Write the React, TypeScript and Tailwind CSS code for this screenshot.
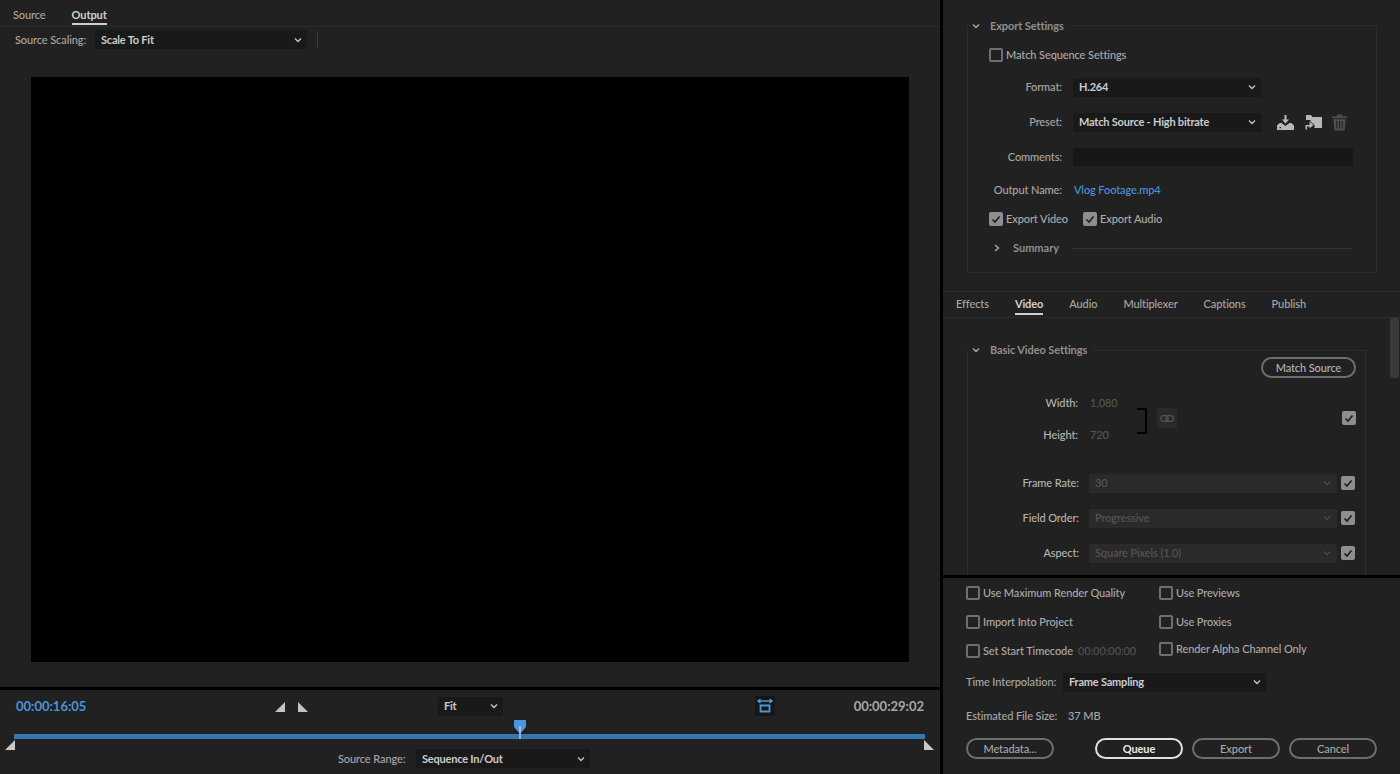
import React from 'react';

const Chevron = ({ className = 'text-[#c8c8c8]' }: { className?: string }) => (
  <svg width="8" height="6" viewBox="0 0 8 6" fill="none" className={className}>
    <path d="M1 1.5 L4 4.5 L7 1.5" stroke="currentColor" strokeWidth="1.3" />
  </svg>
);

const Check = ({ checked = false, className = '' }: { checked?: boolean; className?: string }) =>
  checked ? (
    <span className={`flex h-[14px] w-[14px] shrink-0 items-center justify-center rounded-[2px] bg-[#8e8e8e] ${className}`}>
      <svg width="10" height="9" viewBox="0 0 10 9" fill="none">
        <path d="M1.5 4.5 L4 7 L8.5 1.5" stroke="#1c1c1c" strokeWidth="1.6" />
      </svg>
    </span>
  ) : (
    <span className={`h-[14px] w-[14px] shrink-0 rounded-[2px] border-2 border-[#6f6f6f] ${className}`} />
  );

const CheckRow = ({ label, checked, className = '' }: { label: string; checked?: boolean; className?: string }) => (
  <div className={`flex h-[20px] items-center gap-[3px] ${className}`}>
    <Check checked={checked} />
    <span className="whitespace-nowrap text-[#ababab]">{label}</span>
  </div>
);

const Select = ({ value, className = '' }: { value: string; className?: string }) => (
  <div className={`flex h-[19px] shrink-0 items-center justify-between rounded-[1px] bg-[#191919] pl-[6px] pr-[5px] font-bold tracking-[-0.2px] text-[#cccccc] ${className}`}>
    <span className="whitespace-nowrap">{value}</span>
    <Chevron />
  </div>
);

const DisabledRow = ({ label, value, className = '' }: { label: string; value: string; className?: string }) => (
  <div className={`flex h-[20px] items-center ${className}`}>
    <span className="w-[83px] shrink-0 text-right text-[#b4b4b4]">{label}</span>
    <div className="ml-[10px] flex h-[19px] w-[248px] items-center justify-between rounded-[1px] bg-[#2a2a2a] pl-[6px] pr-[6px] text-[#565656]">
      <span>{value}</span>
      <Chevron className="text-[#4a4a4a]" />
    </div>
    <Check checked className="ml-[4px]" />
  </div>
);

const Pill = ({ label, className = '' }: { label: string; className?: string }) => (
  <div className={`flex h-[21px] shrink-0 items-center justify-center rounded-full border-2 border-[#6e6e6e] text-[#a8a8a8] ${className}`}>
    {label}
  </div>
);

const Tabs = ({ items, active, className = '', itemClass = '' }: { items: string[]; active: string; className?: string; itemClass?: string }) => (
  <div className={`flex gap-[26px] ${className}`}>
    {items.map((t) => (
      <div key={t} className={`flex h-full items-center border-b-2 ${itemClass} ${t === active ? 'border-[#cfcfcf] font-bold text-[#d0d0d0]' : 'border-transparent text-[#a8a8a8]'}`}>
        {t}
      </div>
    ))}
  </div>
);

const SaveIcon = () => (
  <svg width="17" height="15" viewBox="0 0 17 15" className="text-[#b8b8b8]">
    <path fill="currentColor" d="M7.500 0h2v4.500h2.500L8.500 8.500 5 4.500h2.500z" />
    <path fill="currentColor" d="M0 10.500l2.500-2.500h2l4 3 4-3h2l2.500 2.500V15H0zM2.500 12v1.200h1.500V12z" />
  </svg>
);

const ImportIcon = () => (
  <svg width="17" height="16" viewBox="0 0 17 16" className="text-[#b8b8b8]">
    <path fill="currentColor" d="M1 1h5l1.500 2H17v11H9.500v-3L5.500 7.500V6H1z" />
    <path fill="currentColor" d="M4.500 7.500l4 3.500-4 3.500V12.500H2V15.500H.500v-4.500h4z" />
  </svg>
);

const TrashIcon = () => (
  <svg width="15" height="17" viewBox="0 0 16 17" className="-ml-[1px] text-[#4f4f4f]">
    <path fill="currentColor" d="M0 2h5V0h6v2h5v2H0zM1.500 5h13l-1 12h-11zM4.500 7v8h1.200V7zM7.400 7v8h1.200V7zM10.300 7v8h1.200V7z" />
  </svg>
);

const SafeMarginIcon = () => (
  <svg width="16" height="14" viewBox="0 0 16 14" fill="none" stroke="#4c96dc" strokeWidth="1.500">
    <path d="M1 2h14M3.500 0L1 2l2.500 2M12.500 0L15 2l-2.500 2" />
    <path d="M3.500 6.500h9v6h-9z" strokeWidth="1.800" />
  </svg>
);

export default function App() {
  return (
    <div className="flex h-[774px] w-[1400px] overflow-hidden bg-[#212121] text-[11px] font-medium leading-[12px] tracking-[-0.1px] [font-family:'Lato',sans-serif]">
      {/* Left: preview */}
      <div className="flex w-[940px] shrink-0 flex-col">
        <div className="h-[27px] shrink-0 border-b border-[#2c2c2c]">
          <Tabs items={['Source', 'Output']} active="Output" className="h-[25px] pl-[13px]" itemClass="pt-[6px]" />
        </div>
        <div className="flex h-[25px] shrink-0 items-center pl-[15px]">
          <span className="w-[72px] whitespace-nowrap text-[#a8a8a8]">Source Scaling:</span>
          <Select value="Scale To Fit" className="ml-[8px] w-[212px]" />
          <div className="ml-[10px] h-[17px] w-px bg-[#3a3a3a]" />
        </div>
        <div className="flex-1 px-[31px] pb-[25px] pt-[25px]">
          <div className="h-full w-[878px] bg-black" />
        </div>
        <div className="h-[3px] shrink-0 bg-black" />
        <div className="h-[84px] shrink-0 pt-[6px]">
          <div className="flex h-[20px] items-center pl-[16px] pr-[16px]">
            <span className="w-[259px] text-[13px] font-bold tracking-normal text-[#4c93d8]">00:00:16:05</span>
            <svg width="11" height="11" viewBox="0 0 11 11"><path d="M0 11L10 1V11Z" fill="#c4c4c4" /></svg>
            <svg width="11" height="11" viewBox="0 0 11 11" className="ml-[11px]"><path d="M1 1L11 11H1Z" fill="#c4c4c4" /></svg>
            <Select value="Fit" className="ml-[130px] w-[65px]" />
            <div className="ml-[252px] flex h-[20px] w-[20px] items-center justify-center rounded-[1px] bg-[#161616]">
              <SafeMarginIcon />
            </div>
            <span className="ml-auto text-[13px] font-bold tracking-normal text-[#a8a8a8]">00:00:29:02</span>
          </div>
          <div className="relative ml-[14px] mt-[18px] h-[5px] w-[911px] bg-[#3478b2]">
            <svg width="11" height="10" viewBox="0 0 11 10" className="absolute left-[-9px] top-[6px]"><path d="M0 10L10 0V10Z" fill="#c8c8c8" /></svg>
            <svg width="11" height="10" viewBox="0 0 11 10" className="absolute right-[-10px] top-[6px]"><path d="M0 0L10 10H0Z" fill="#c8c8c8" /></svg>
            <svg width="12" height="19" viewBox="0 0 12 19" className="absolute left-[500px] top-[-14px]">
              <path d="M0 0H12V7L6 14L0 7Z" fill="#4c93e0" />
              <path d="M6 6V19" stroke="#e8e8e8" strokeWidth="1" />
            </svg>
          </div>
          <div className="mt-[10px] flex h-[19px] items-center">
            <span className="ml-[338px] w-[68px] whitespace-nowrap text-[#a8a8a8]">Source Range:</span>
            <Select value="Sequence In/Out" className="ml-[10px] w-[174px]" />
          </div>
        </div>
      </div>

      <div className="w-[3px] shrink-0 bg-black" />

      {/* Right: settings */}
      <div className="flex w-[457px] shrink-0 flex-col">
        <div className="h-[291px] shrink-0 pl-[24px] pr-[23px] pt-[25px]">
          <div className="rounded-[1px] border border-[#2d2d2d] px-[4px] pb-[14px]">
            <div className="-ml-[1px] -mt-[9px] flex h-[18px] w-fit items-center bg-[#212121] pl-[1px] pr-[6px] font-bold text-[#8f8f8f]">
              <Chevron className="text-[#b0b0b0]" />
              <span className="ml-[10px]">Export Settings</span>
            </div>
            <CheckRow label="Match Sequence Settings" className="ml-[17px] mt-[10px]" />
            <div className="mt-[12px] flex h-[20px] items-center">
              <span className="w-[90px] text-right text-[#a8a8a8]">Format:</span>
              <Select value="H.264" className="ml-[11px] w-[188px]" />
            </div>
            <div className="mt-[15px] flex h-[20px] items-center">
              <span className="w-[90px] text-right text-[#a8a8a8]">Preset:</span>
              <Select value="Match Source - High bitrate" className="ml-[11px] w-[188px]" />
              <div className="ml-[16px] flex items-center gap-[11px]">
                <SaveIcon />
                <ImportIcon />
                <TrashIcon />
              </div>
            </div>
            <div className="mt-[15px] flex h-[20px] items-center">
              <span className="w-[90px] text-right text-[#a8a8a8]">Comments:</span>
              <div className="ml-[11px] h-[18px] w-[280px] bg-[#171717]" />
            </div>
            <div className="mt-[13px] flex h-[20px] items-center">
              <span className="w-[90px] text-right text-[#a8a8a8]">Output Name:</span>
              <span className="ml-[12px] text-[#4c93dc]">Vlog Footage.mp4</span>
            </div>
            <div className="ml-[17px] mt-[9px] flex">
              <CheckRow label="Export Video" className="w-[94px]" checked />
              <CheckRow label="Export Audio" checked />
            </div>
            <div className="ml-[22px] mt-[9px] flex h-[20px] items-center">
              <svg width="6" height="8" viewBox="0 0 6 8" fill="none"><path d="M1 1L4.500 4L1 7" stroke="#b0b0b0" strokeWidth="1.300" /></svg>
              <span className="ml-[13px] w-[50px] font-bold tracking-normal text-[#8f8f8f]">Summary</span>
              <div className="ml-[9px] h-px w-[280px] bg-[#333333]" />
            </div>
          </div>
        </div>

        <div className="h-[27px] shrink-0 border-y border-[#2c2c2c]">
          <Tabs items={['Effects', 'Video', 'Audio', 'Multiplexer', 'Captions', 'Publish']} active="Video" className="h-[23px] pl-[13px]" itemClass="pt-[3px]" />
        </div>

        <div className="relative h-[257px] shrink-0 overflow-hidden pl-[24px] pt-[32px]">
          <div className="absolute right-[1px] top-0 h-[60px] w-[9px] rounded-[2px] bg-[#3a3a3a]" />
          <div className="h-[260px] w-[399px] border border-b-0 border-[#2d2d2d] pl-[4px] pr-[9px]">
            <div className="-ml-[1px] -mt-[10px] flex h-[18px] w-fit items-center bg-[#212121] pl-[1px] pr-[6px] font-bold text-[#8f8f8f]">
              <Chevron className="text-[#b0b0b0]" />
              <span className="ml-[10px]">Basic Video Settings</span>
            </div>
            <div className="-mt-[2px] flex justify-end">
              <Pill label="Match Source" className="w-[95px] text-[#b4b4b4]" />
            </div>
            <div className="mt-[15px] flex h-[52px] items-center">
              <div className="flex h-full w-[150px] flex-col justify-between">
                <div className="flex h-[20px] items-center">
                  <span className="w-[106px] text-right text-[#b4b4b4]">Width:</span>
                  <span className="ml-[12px] text-[#565656]">1,080</span>
                </div>
                <div className="flex h-[20px] items-center">
                  <span className="w-[106px] text-right text-[#b4b4b4]">Height:</span>
                  <span className="ml-[12px] text-[#565656]">720</span>
                </div>
              </div>
              <div className="ml-[15px] mt-[4px] h-[26px] w-[10px] border-y-2 border-r-2 border-black" />
              <div className="-mt-[2px] ml-[10px] flex h-[20px] w-[20px] items-center justify-center bg-[#2a2a2a]">
                <svg width="14" height="7" viewBox="0 0 14 7" fill="none" stroke="#555555" strokeWidth="1.200">
                  <rect x="0.600" y="0.600" width="7.500" height="5.800" rx="2.900" />
                  <rect x="5.900" y="0.600" width="7.500" height="5.800" rx="2.900" />
                </svg>
              </div>
              <Check checked className="-mt-[2px] ml-[165px]" />
            </div>
            <DisabledRow label="Frame Rate:" value="30" className="ml-[24px] mt-[28px]" />
            <DisabledRow label="Field Order:" value="Progressive" className="ml-[24px] mt-[15px]" />
            <DisabledRow label="Aspect:" value="Square Pixels (1.0)" className="ml-[24px] mt-[15px]" />
          </div>
        </div>

        <div className="h-[3px] shrink-0 bg-black" />

        <div className="flex-1 pl-[23px] pr-[23px] pt-[5px]">
          <div className="flex">
            <div className="w-[193px]">
              <CheckRow label="Use Maximum Render Quality" />
              <CheckRow label="Import Into Project" className="mt-[9px]" />
              <div className="mt-[9px] flex items-center">
                <CheckRow label="Set Start Timecode" />
                <span className="ml-[5px] whitespace-nowrap text-[#505050]">00:00:00:00</span>
              </div>
            </div>
            <div>
              <CheckRow label="Use Previews" />
              <CheckRow label="Use Proxies" className="mt-[9px]" />
              <CheckRow label="Render Alpha Channel Only" className="mt-[7px]" />
            </div>
          </div>
          <div className="mt-[11px] flex h-[20px] items-center">
            <span className="w-[91px] whitespace-nowrap text-[#a8a8a8]">Time Interpolation:</span>
            <Select value="Frame Sampling" className="ml-[6px] w-[203px]" />
          </div>
          <div className="mt-[14px] flex h-[20px] items-center text-[#a8a8a8]">
            <span className="w-[91px] whitespace-nowrap">Estimated File Size:</span>
            <span className="ml-[11px]">37 MB</span>
          </div>
          <div className="mt-[12px] flex">
            <Pill label="Metadata..." className="w-[88px]" />
            <Pill label="Queue" className="ml-[41px] w-[88px] border-[#e0e0e0] font-bold text-[#e8e8e8]" />
            <Pill label="Export" className="ml-[9px] w-[88px]" />
            <Pill label="Cancel" className="ml-[9px] w-[88px]" />
          </div>
        </div>
      </div>
    </div>
  );
}
